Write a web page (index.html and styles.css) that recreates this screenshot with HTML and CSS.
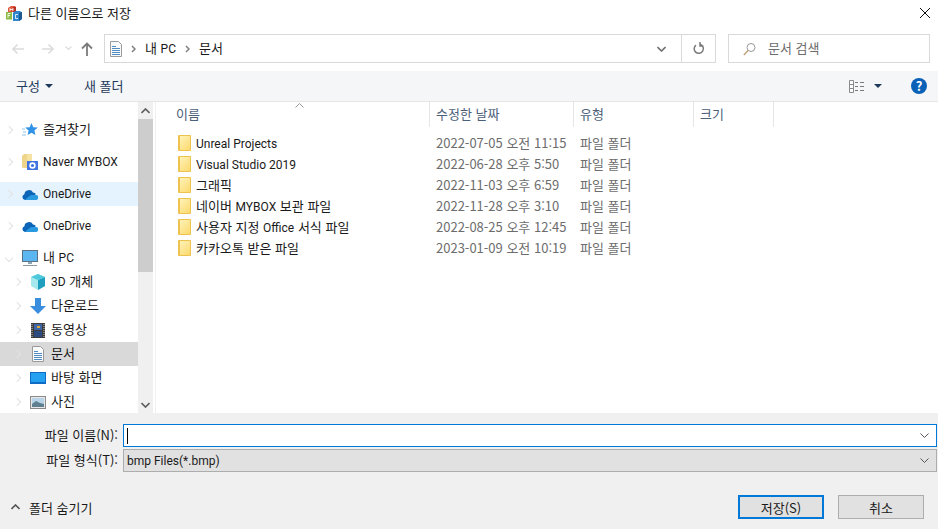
FILE: index.html
```html
<!DOCTYPE html>
<html lang="ko">
<head>
    <meta charset="UTF-8">
    <title>다른 이름으로 저장</title>
    <link rel="stylesheet" href="styles.css">
</head>
<body>
    <div class="dialog">
        <div class="titlebar">
            <svg class="app-icon" width="16" height="16" viewBox="0 0 16 16">
                <path d="M2 3l3-2h4l1 1v5H2z" fill="#e2563a"/>
                <path d="M7 2l3 0v5H7z" fill="#b5342a"/>
                <path d="M4 3v3M7 3v3M4 4.500h3" stroke="#fff" stroke-width=".8" fill="none"/>
                <path d="M0 7h6v7.500H0z" fill="#8cbb45"/>
                <path d="M2 8.500v4.500M2 8.500h2.500M2 10.500h2" stroke="#fff" stroke-width=".8" fill="none"/>
                <path d="M7 7.500l3-1.500h4l2 1.500V14l-3 2H7z" fill="#2f86cf"/>
                <path d="M13 8l3-1v7l-3 2z" fill="#1b5a92"/>
                <path d="M12 9.500H9.500v4H12" stroke="#fff" stroke-width=".8" fill="none"/>
            </svg>
            <span class="title-text">다른 이름으로 저장</span>
            <svg class="close-icon" width="12" height="12" viewBox="0 0 12 12">
                <path d="M1 1l10 10M11 1L1 11" stroke="#111" stroke-width="1" fill="none"/>
            </svg>
        </div>

        <div class="navbar">
            <div class="nav-buttons">
                <svg width="14" height="12" viewBox="0 0 14 12"><path d="M13 6H2M6.500 1.500L2 6l4.500 4.500" stroke="#dcdcdc" stroke-width="1.700" fill="none"/></svg>
                <svg class="nav-forward" width="14" height="12" viewBox="0 0 14 12"><path d="M1 6h11M7.500 1.500L12 6l-4.500 4.500" stroke="#dcdcdc" stroke-width="1.700" fill="none"/></svg>
                <svg class="nav-recent" width="7" height="5" viewBox="0 0 7 5"><path d="M.5 .5L3.500 3.500 6.500 .5" stroke="#dcdcdc" stroke-width="1.200" fill="none"/></svg>
                <svg class="nav-up" width="12" height="14" viewBox="0 0 12 14"><path d="M6 14V2M1 6.500L6 1.500l5 5" stroke="#7b7b7b" stroke-width="1.800" fill="none"/></svg>
            </div>
            <div class="address">
                <svg class="doc-icon" width="12" height="16" viewBox="0 0 12 16">
                    <path d="M.5 .5h8l3 3v12H.5z" fill="#fafafa" stroke="#9a9a9a"/>
                    <path d="M2 5.500h4M2 7.500h8M2 9.500h8M2 11.500h8M2 13.500h8" stroke="#4f8cc4"/>
                </svg>
                <svg class="crumb-sep" width="5" height="8" viewBox="0 0 5 8"><path d="M1 1l3 3-3 3" stroke="#808080" stroke-width="1.500" fill="none"/></svg>
                <span class="crumb">내 <span class="en">PC</span></span>
                <svg class="crumb-sep" width="5" height="8" viewBox="0 0 5 8"><path d="M1 1l3 3-3 3" stroke="#808080" stroke-width="1.500" fill="none"/></svg>
                <span class="crumb">문서</span>
                <span class="address-fill"></span>
                <svg class="addr-chevron" width="9" height="6" viewBox="0 0 9 6"><path d="M.5 1L4.500 5 8.500 1" stroke="#707070" stroke-width="1.600" fill="none"/></svg>
                <span class="refresh">
                    <svg width="12" height="13" viewBox="0 0 12 13"><path d="M7.500 2.500a4.600 4.600 0 1 1-4.500 .6M7 0v4h3.400" stroke="#7a7a7a" stroke-width="1.500" fill="none"/></svg>
                </span>
            </div>
            <div class="search">
                <svg width="13" height="14" viewBox="0 0 13 14"><circle cx="8" cy="5.500" r="4" stroke="#9a9a9a" fill="none"/><path d="M5 8.500L.8 13" stroke="#c09a70" stroke-width="1.200"/></svg>
                <span>문서 검색</span>
            </div>
        </div>

        <div class="toolbar">
            <span class="tool-btn"><span class="tool-text">구성</span><i class="caret"></i></span>
            <span class="tool-btn new-folder"><span class="tool-text">새 폴더</span></span>
            <span class="toolbar-fill"></span>
            <svg width="16" height="13" viewBox="0 0 16 13">
                <path d="M.5 .5h4v12h-4zM.5 4.500h4M.5 8.500h4" stroke="#8a8a8a" fill="#fff"/>
                <path d="M6 2.500h3M11 2.500h4M6 6.500h3M11 6.500h4M6 10.500h3M11 10.500h4" stroke="#7a7a7a"/>
            </svg>
            <i class="caret view-caret"></i>
            <span class="help">?</span>
        </div>

        <div class="main">
            <div class="tree">
                <div class="tree-row">
                    <i class="arrow"></i>
                    <span class="icon-slot"><svg width="16" height="16" viewBox="0 0 16 16"><path d="M9.500 1l1.800 4.200 4.500 .4-3.400 3 1 4.400-3.900-2.300L5.600 13l1-4.400-3.400-3 4.500-.4z" fill="#2e92e6"/><path d="M0 7h3M1 10h3M0 13h4" stroke="#8fc4ee"/></svg></span>
                    <span class="label">즐겨찾기</span>
                </div>
                <div class="tree-row group">
                    <i class="arrow"></i>
                    <span class="icon-slot"><svg width="16" height="16" viewBox="0 0 16 16"><path d="M0 2l2-2h3v14H1l-1-1z" fill="#efd58c"/><path d="M5 0h5v8H5z" fill="#f6e3a4"/><rect x="5" y="7" width="11" height="9" fill="#3f74e0"/><circle cx="10.500" cy="11.500" r="2.400" fill="none" stroke="#fff" stroke-width="1.600"/></svg></span>
                    <span class="label en">Naver MYBOX</span>
                </div>
                <div class="tree-row group hovered">
                    <i class="arrow"></i>
                    <span class="icon-slot"><svg width="16" height="11" viewBox="0 0 16 11"><path d="M3 11a3 3 0 0 1-.6-5.800A4.600 4.600 0 0 1 11 3.400a3.600 3.600 0 0 1 3 1.600L6 11z" fill="#0c64b8"/><path d="M3 11h10.500a2.500 2.500 0 0 0 .5-5L9 6 5 9z" fill="#2a9ae0"/></svg></span>
                    <span class="label en">OneDrive</span>
                </div>
                <div class="tree-row group">
                    <i class="arrow"></i>
                    <span class="icon-slot"><svg width="16" height="11" viewBox="0 0 16 11"><path d="M3 11a3 3 0 0 1-.6-5.800A4.600 4.600 0 0 1 11 3.400a3.600 3.600 0 0 1 3 1.600L6 11z" fill="#0c64b8"/><path d="M3 11h10.500a2.500 2.500 0 0 0 .5-5L9 6 5 9z" fill="#2a9ae0"/></svg></span>
                    <span class="label en">OneDrive</span>
                </div>
                <div class="tree-row group">
                    <i class="arrow open"></i>
                    <span class="icon-slot"><svg width="16" height="16" viewBox="0 0 16 16"><rect x=".5" y=".5" width="15" height="11" fill="#5cb6f2" stroke="#5f7282"/><path d="M6 12h4v2H6z" fill="#8fa6b6"/><path d="M1 15.500h14" stroke="#8a9aa6"/></svg></span>
                    <span class="label">내 <span class="en">PC</span></span>
                </div>
                <div class="tree-row child">
                    <i class="arrow"></i>
                    <span class="icon-slot"><svg width="16" height="16" viewBox="0 0 16 16"><path d="M8 0l7 3v9l-7 4-7-4V3z" fill="#a5e8ee"/><path d="M8 6l7-3v9l-7 4z" fill="#1e9fc0"/><path d="M8 6L1 3l7-3 7 3z" fill="#4fc8dc"/></svg></span>
                    <span class="label"><span class="en">3D</span> 개체</span>
                </div>
                <div class="tree-row child">
                    <i class="arrow"></i>
                    <span class="icon-slot"><svg width="16" height="16" viewBox="0 0 16 16"><path d="M5 0h6v8h5l-8 8-8-8h5z" fill="#3a8ede"/></svg></span>
                    <span class="label">다운로드</span>
                </div>
                <div class="tree-row child">
                    <i class="arrow"></i>
                    <span class="icon-slot"><svg width="14" height="15" viewBox="0 0 14 15"><rect width="14" height="15" fill="#3c3c3c"/><path d="M1 1v13M13 1v13" stroke="#ccc" stroke-dasharray="1 1"/><rect x="3" y="1" width="8" height="6" fill="#3f66a8"/><rect x="3" y="8" width="8" height="6" fill="#2a4a80"/><path d="M6 3h3v2H6z" fill="#d9a93a"/></svg></span>
                    <span class="label">동영상</span>
                </div>
                <div class="tree-row child selected">
                    <i class="arrow"></i>
                    <span class="icon-slot"><svg width="12" height="16" viewBox="0 0 12 16"><path d="M.5 .5h8l3 3v12H.5z" fill="#fafafa" stroke="#9a9a9a"/><path d="M2 5.500h4M2 7.500h8M2 9.500h8M2 11.500h8M2 13.500h8" stroke="#4f8cc4"/></svg></span>
                    <span class="label">문서</span>
                </div>
                <div class="tree-row child">
                    <i class="arrow"></i>
                    <span class="icon-slot"><svg width="16" height="12" viewBox="0 0 16 12"><rect width="16" height="12" fill="#0f6cc4"/><rect x="1" y="1" width="14" height="9" fill="#23a0f0"/></svg></span>
                    <span class="label">바탕 화면</span>
                </div>
                <div class="tree-row child">
                    <i class="arrow"></i>
                    <span class="icon-slot"><svg width="16" height="13" viewBox="0 0 16 13"><rect x=".5" y=".5" width="15" height="12" fill="#e8e8e8" stroke="#8a8a8a"/><rect x="2" y="2" width="12" height="9" fill="#b8d4e8"/><path d="M2 8l4-3 4 2 4 1v3H2z" fill="#5e8090"/></svg></span>
                    <span class="label">사진</span>
                </div>
            </div>

            <div class="scrollbar">
                <div class="scroll-btn"><svg width="9" height="6" viewBox="0 0 9 6"><path d="M.5 5L4.500 1 8.500 5" stroke="#606060" stroke-width="1.700" fill="none"/></svg></div>
                <div class="scroll-track"><div class="scroll-thumb"></div></div>
                <div class="scroll-btn"><svg width="9" height="6" viewBox="0 0 9 6"><path d="M.5 1L4.500 5 8.500 1" stroke="#606060" stroke-width="1.700" fill="none"/></svg></div>
            </div>

            <div class="files">
                <div class="file-head">
                    <svg class="sort-mark" width="9" height="5" viewBox="0 0 9 5"><path d="M.5 4.500L4.500 .5 8.500 4.500" stroke="#999" fill="none"/></svg>
                    <span class="col col-name">이름</span>
                    <span class="col col-date">수정한 날짜</span>
                    <span class="col col-type">유형</span>
                    <span class="col col-size">크기</span>
                </div>
                <div class="file-rows">
                    <div class="file-row">
                        <span class="col-name name-cell"><i class="folder"></i><span class="en">Unreal Projects</span></span>
                        <span class="col-date meta">2022-07-05 오전 11:15</span>
                        <span class="col-type meta">파일 폴더</span>
                    </div>
                    <div class="file-row">
                        <span class="col-name name-cell"><i class="folder"></i><span class="en">Visual Studio 2019</span></span>
                        <span class="col-date meta">2022-06-28 오후 5:50</span>
                        <span class="col-type meta">파일 폴더</span>
                    </div>
                    <div class="file-row">
                        <span class="col-name name-cell"><i class="folder"></i><span>그래픽</span></span>
                        <span class="col-date meta">2022-11-03 오후 6:59</span>
                        <span class="col-type meta">파일 폴더</span>
                    </div>
                    <div class="file-row">
                        <span class="col-name name-cell"><i class="folder"></i><span>네이버 <span class="en">MYBOX</span> 보관 파일</span></span>
                        <span class="col-date meta">2022-11-28 오후 3:10</span>
                        <span class="col-type meta">파일 폴더</span>
                    </div>
                    <div class="file-row">
                        <span class="col-name name-cell"><i class="folder"></i><span>사용자 지정 <span class="en">Office</span> 서식 파일</span></span>
                        <span class="col-date meta">2022-08-25 오후 12:45</span>
                        <span class="col-type meta">파일 폴더</span>
                    </div>
                    <div class="file-row">
                        <span class="col-name name-cell"><i class="folder"></i><span>카카오톡 받은 파일</span></span>
                        <span class="col-date meta">2023-01-09 오전 10:19</span>
                        <span class="col-type meta">파일 폴더</span>
                    </div>
                </div>
            </div>
        </div>

        <div class="footer">
            <div class="field">
                <label class="field-label">파일 이름(N):</label>
                <div class="field-box name-box"><i class="text-cursor"></i><svg class="combo-arrow" width="9" height="5" viewBox="0 0 9 5"><path d="M.5 .5L4.500 4.500 8.500 .5" stroke="#555" fill="none"/></svg></div>
            </div>
            <div class="field">
                <label class="field-label">파일 형식(T):</label>
                <div class="field-box type-box"><span class="en">bmp Files(*.bmp)</span><svg class="combo-arrow" width="9" height="5" viewBox="0 0 9 5"><path d="M.5 .5L4.500 4.500 8.500 .5" stroke="#555" fill="none"/></svg></div>
            </div>
            <div class="actions">
                <span class="hide-folders">
                    <svg width="9" height="6" viewBox="0 0 9 6"><path d="M.5 5L4.500 1 8.500 5" stroke="#555" stroke-width="1.600" fill="none"/></svg>
                    폴더 숨기기
                </span>
                <button class="btn btn-default">저장(S)</button>
                <button class="btn">취소</button>
            </div>
        </div>
    </div>
</body>
</html>
```

FILE: styles.css
```css
html, body {
    margin: 0;
    height: 100%;
}

body {
    font-family: "Noto Sans CJK KR", "Noto Sans", sans-serif;
    font-size: 13px;
    color: #1a1a1a;
    background-color: #fff;
    overflow: hidden;
}

/* Latin runs sit a size down next to the Hangul */
.en {
    font-family: Roboto, "Noto Sans", sans-serif;
    font-size: 12px;
}

.dialog {
    width: 938px;
    height: 529px;
    display: flex;
    flex-direction: column;
}

/* Title bar */
.titlebar {
    height: 27px;
    display: flex;
    align-items: center;
    padding: 0 7px 1px 6px;
    box-sizing: border-box;
    flex: none;
}

.title-text {
    margin: 0 0 2px 6px;
    flex: 1;
}

/* Back, forward, address and search */
.navbar {
    height: 44px;
    display: flex;
    padding: 7px 8px 8px 11px;
    box-sizing: border-box;
    flex: none;
}

.nav-buttons {
    width: 93px;
    display: flex;
    align-items: center;
}

.nav-forward {
    margin-left: 16px;
}

.nav-recent {
    margin-left: 10px;
}

.nav-up {
    margin-left: 9px;
}

.address {
    width: 612px;
    display: flex;
    align-items: center;
    gap: 9px;
    border: 1px solid #d9d9d9;
    box-sizing: border-box;
    padding-left: 5px;
}

.crumb {
    margin-bottom: 2px;
}

.address-fill {
    flex: 1;
}

.addr-chevron {
    margin-right: 7px;
}

.refresh {
    width: 33px;
    align-self: stretch;
    border-left: 1px solid #d9d9d9;
    display: flex;
    align-items: center;
    justify-content: center;
    margin-left: -1px;
}

.search {
    width: 202px;
    margin-left: 12px;
    display: flex;
    align-items: center;
    gap: 12px;
    padding-left: 14px;
    border: 1px solid #d9d9d9;
    box-sizing: border-box;
    color: #6d6d6d;
}

.search span {
    margin-bottom: 2px;
}

/* Organize strip */
.toolbar {
    height: 31px;
    display: flex;
    align-items: center;
    background-color: #f5f6f7;
    border-bottom: 1px solid #e5e5e5;
    box-sizing: border-box;
    padding: 0 11px 0 16px;
    flex: none;
}

.tool-btn {
    display: flex;
    align-items: center;
    color: #1e395b;
}

.tool-text {
    margin-bottom: 2px;
}

.new-folder {
    margin-left: 31px;
}

.toolbar-fill {
    flex: 1;
}

.caret {
    width: 0;
    height: 0;
    margin-left: 5px;
    border-top: 4px solid #1e395b;
    border-left: 4px solid transparent;
    border-right: 4px solid transparent;
}

.view-caret {
    margin-left: 9px;
}

.help {
    width: 16px;
    height: 16px;
    margin-left: 29px;
    border-radius: 50%;
    background-color: #0a62b8;
    color: #fff;
    font-weight: bold;
    font-size: 13px;
    line-height: 16px;
    text-align: center;
}

/* Navigation tree, scrollbar and file list */
.main {
    height: 311px;
    display: flex;
    flex: none;
}

.tree {
    width: 138px;
    padding-top: 16px;
    box-sizing: border-box;
    overflow: hidden;
    flex: none;
}

.tree-row {
    height: 24px;
    display: flex;
    align-items: center;
    padding-left: 6px;
    white-space: nowrap;
}

.tree-row.group {
    margin-top: 8px;
}

.tree-row.child {
    padding-left: 14px;
}

.tree-row.hovered {
    background-color: #e5f3ff;
}

.tree-row.selected {
    background-color: #d9d9d9;
}

.arrow {
    width: 5px;
    height: 5px;
    margin-right: 10px;
    border-top: 1.5px solid #e2e2e2;
    border-right: 1.5px solid #e2e2e2;
    transform: rotate(45deg);
    flex: none;
}

.arrow.open {
    transform: rotate(135deg);
}

.icon-slot {
    width: 16px;
    margin-right: 5px;
    display: flex;
    justify-content: center;
    flex: none;
}

.label {
    margin-bottom: 3px;
}

.label.en {
    margin-bottom: 0;
}

.scrollbar {
    width: 15px;
    display: flex;
    flex-direction: column;
    background-color: #f0f0f0;
    flex: none;
}

.scroll-btn {
    height: 17px;
    display: flex;
    align-items: center;
    justify-content: center;
    flex: none;
}

.scroll-track {
    flex: 1;
}

.scroll-thumb {
    height: 153px;
    background-color: #cdcdcd;
}

.files {
    flex: 1;
    position: relative;
    margin-left: 2px;
    border-left: 1px solid #f0f0f0;
}

.sort-mark {
    position: absolute;
    left: 139px;
    top: 1px;
}

.file-head {
    height: 25px;
    display: flex;
    align-items: center;
    color: #4c607a;
}

.col {
    height: 100%;
    display: flex;
    align-items: center;
    border-right: 1px solid #e5e5e5;
    box-sizing: border-box;
    padding: 0 0 3px 6px;
}

.col-name {
    width: 274px;
    padding-left: 20px;
}

.col-date {
    width: 144px;
}

.col-type {
    width: 120px;
}

.col-size {
    width: 80px;
}

.file-rows {
    padding-top: 5px;
}

.file-row {
    height: 21px;
    display: flex;
    align-items: center;
}

.file-row > span {
    padding-left: 6px;
    box-sizing: border-box;
}

.file-row > .name-cell {
    display: flex;
    align-items: center;
    padding-left: 22px;
}

.name-cell > .en {
    margin-top: 2px;
}

.meta {
    color: #6d6d6d;
}

.folder {
    width: 13px;
    height: 16px;
    margin-right: 5px;
    background: linear-gradient(135deg, #fff3b8, #fbd96e);
    border: 1px solid #eec24e;
    border-left-width: 2px;
    border-radius: 1px;
    box-sizing: border-box;
}

/* File name, file type and buttons */
.footer {
    flex: 1;
    background-color: #f0f0f0;
    padding-top: 11px;
    box-sizing: border-box;
}

.field {
    height: 25px;
    display: flex;
}

.field-label {
    width: 118px;
    margin: 1px 5px 0 0;
    text-align: right;
}

.field-box {
    width: 814px;
    height: 23px;
    box-sizing: border-box;
    display: flex;
    align-items: center;
    justify-content: space-between;
    padding: 0 7px 0 3px;
}

.name-box {
    border: 1px solid #0078d7;
    background-color: #fff;
}

.type-box {
    border: 1px solid #adadad;
    background-color: #e1e1e1;
}

.text-cursor {
    width: 1px;
    height: 16px;
    background-color: #000;
}

.actions {
    display: flex;
    align-items: center;
    margin-top: 21px;
    padding-left: 11px;
}

.hide-folders {
    flex: 1;
    display: flex;
    align-items: center;
    gap: 9px;
}

.btn {
    width: 86px;
    height: 24px;
    margin-right: 14px;
    padding: 0;
    font: inherit;
    color: #1a1a1a;
    background-color: #e1e1e1;
    border: 1px solid #adadad;
}

.btn-default {
    border: 2px solid #0078d7;
}
```
